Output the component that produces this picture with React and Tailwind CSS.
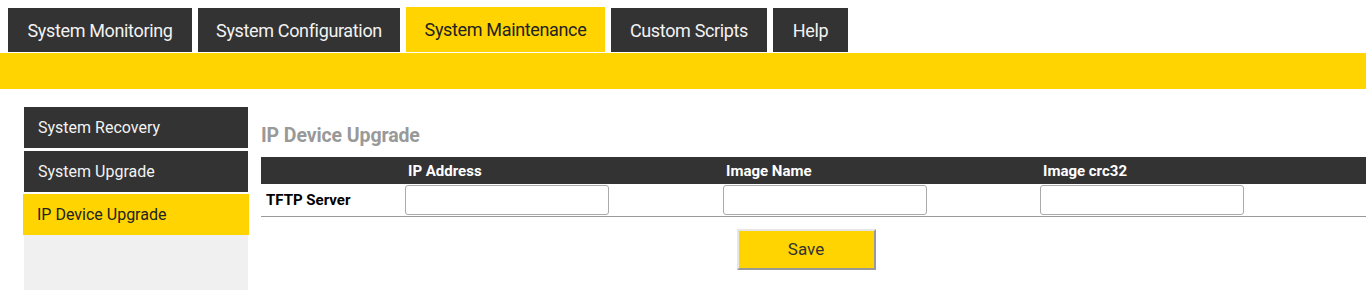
import React from "react";

const tabs = [
  { label: "System Monitoring", active: false, w: "w-[184px]" },
  { label: "System Configuration", active: false, w: "w-[202px]" },
  { label: "System Maintenance", active: true, w: "w-[199px]" },
  { label: "Custom Scripts", active: false, w: "w-[156px]" },
  { label: "Help", active: false, w: "w-[75px]" },
];

const side = [
  { label: "System Recovery", active: false },
  { label: "System Upgrade", active: false },
  { label: "IP Device Upgrade", active: true },
];

export default function App() {
  return (
    <div
      className="w-[1367px] h-[290px] bg-white overflow-hidden"
      style={{ fontFamily: "Roboto, 'Liberation Sans', sans-serif" }}
    >
      {/* top tabs */}
      <div className="flex items-end gap-[6px] pl-[8px] h-[52px]">
        {tabs.map((t) =>
          t.active ? (
            <div
              key={t.label}
              className={`${t.w} h-[45px] flex items-center justify-center bg-[#ffd400] text-[#222] text-[18px] tracking-[-0.35px] whitespace-nowrap`}
            >
              {t.label}
            </div>
          ) : (
            <div
              key={t.label}
              className={`${t.w} h-[44px] flex items-center justify-center bg-[#333333] text-[#f2f2f2] text-[18px] tracking-[-0.35px] pt-[1px] whitespace-nowrap`}
            >
              {t.label}
            </div>
          )
        )}
      </div>
      <div className="h-[1px]" />
      <div className="h-[36px] bg-[#ffd400] w-[1366px]" />

      {/* body */}
      <div className="flex pt-[18px] pl-[24px]">
        <div className="w-[224px] flex flex-col">
          {side.map((s, i) =>
            s.active ? (
              <div
                key={s.label}
                className="h-[41px] mt-[2px] -mx-[1px] px-[14px] flex items-center bg-[#ffd400] text-[#222] text-[16px]"
              >
                {s.label}
              </div>
            ) : (
              <div
                key={s.label}
                className={`h-[41px] px-[14px] flex items-center bg-[#333333] text-[#f2f2f2] text-[16px] ${
                  i > 0 ? "mt-[3px]" : ""
                }`}
              >
                {s.label}
              </div>
            )
          )}
          <div className="h-[60px] bg-[#f0f0f0]" />
        </div>

        <div className="flex-1 pl-[13px]">
          <div className="h-[50px] flex items-center pt-[7px] text-[19.5px] font-bold text-[#999999] tracking-[-0.1px]">
            IP Device Upgrade
          </div>
          <div className="grid grid-cols-[142px_318px_317px_1fr] w-[1105px]">
            <div className="h-[27px] bg-[#333333]" />
            <div className="h-[27px] bg-[#333333] text-white font-bold text-[15px] flex items-end pl-[5px] pb-[2px]">
              IP Address
            </div>
            <div className="h-[27px] bg-[#333333] text-white font-bold text-[15px] flex items-end pl-[5px] pb-[2px]">
              Image Name
            </div>
            <div className="h-[27px] bg-[#333333] text-white font-bold text-[15px] flex items-end pl-[5px] pb-[2px]">
              Image crc32
            </div>

            <div className="h-[33px] border-b border-[#999999] flex items-center pl-[5px] font-bold text-[15px] text-black">
              TFTP Server
            </div>
            {[0, 1, 2].map((k) => (
              <div
                key={k}
                className="h-[33px] border-b border-[#999999] flex items-center pl-[2px]"
              >
                <input
                  type="text"
                  className="w-[204px] h-[30px] bg-white border border-[#aaaaaa] rounded-[3px]"
                />
              </div>
            ))}
          </div>
          <div className="flex justify-center w-[1090px] pt-[12px]">
            <button className="w-[139px] h-[41px] bg-[#ffd400] border-2 border-t-[#e6e6e6] border-l-[#e6e6e6] border-r-[#999999] border-b-[#999999] text-[#333] text-[17px]">
              Save
            </button>
          </div>
        </div>
      </div>
    </div>
  );
}
